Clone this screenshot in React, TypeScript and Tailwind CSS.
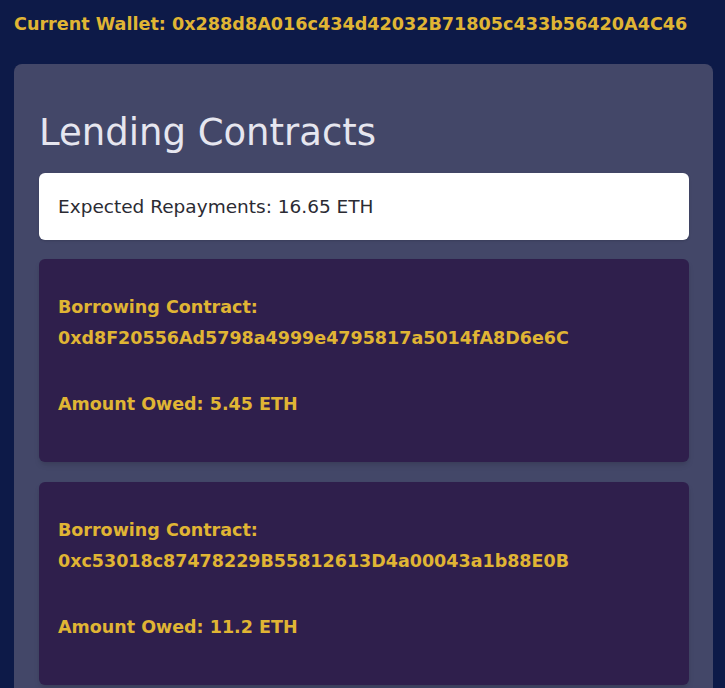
const contracts = [
  { address: "0xd8F20556Ad5798a4999e4795817a5014fA8D6e6C", owed: "5.45" },
  { address: "0xc53018c87478229B55812613D4a00043a1b88E0B", owed: "11.2" },
];

export default function App() {
  return (
    <div
      className="min-h-screen bg-[#0d1a48] pl-[14px] pr-[12px] pt-[12px]"
      style={{ fontFamily: '"Comic Sans MS", "DejaVu Sans", sans-serif' }}
    >
      <p className="text-[17.6px] font-bold leading-[24px] text-[#e0b534]">
        Current Wallet: 0x288d8A016c434d42032B71805c433b56420A4C46
      </p>

      <div className="mt-[28px] rounded-lg bg-[#434768] pl-[25px] pr-[24px] pt-[45px] pb-5">
        <h1 className="text-[37px] leading-[48px] text-[#e6e6ef]">Lending Contracts</h1>

        <div className="mt-[16px] flex h-[67px] items-center rounded-md bg-white px-[19px] text-[18.5px] text-[#2b2b33] shadow">
          Expected Repayments: 16.65 ETH
        </div>

        <div className="mt-[19px] flex flex-col gap-5">
          {contracts.map((c) => (
            <div
              key={c.address}
              className="rounded-md bg-[#2f1f4c] px-[19px] pt-[33px] pb-[42px] text-[17.5px] font-bold leading-[31px] text-[#e0b534] shadow-md"
            >
              <p>
                Borrowing Contract:
                <br />
                {c.address}
              </p>
              <p className="mt-[35px]">Amount Owed: {c.owed} ETH</p>
            </div>
          ))}
        </div>
      </div>
    </div>
  );
}
